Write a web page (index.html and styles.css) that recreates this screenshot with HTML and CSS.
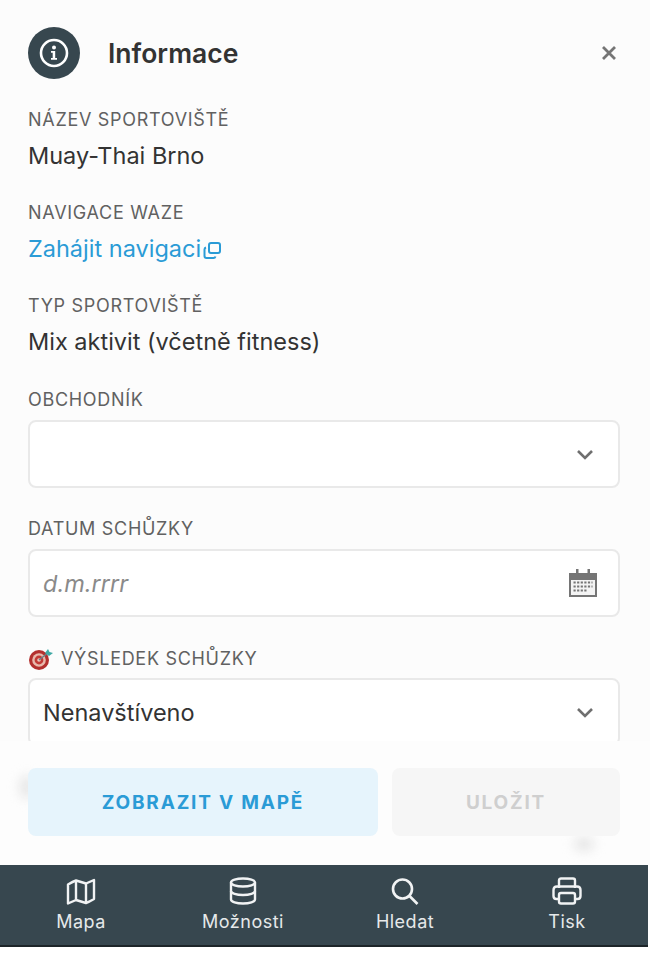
FILE: index.html
```html
<!DOCTYPE html>
<html lang="en">
<head>
    <meta charset="UTF-8">
    <meta name="viewport" content="width=device-width, initial-scale=1.0">
    <title>Informace</title>
    <link rel="stylesheet" href="styles.css">
</head>
<body>
    <div class="panel">
        <div class="scroll">
            <!-- Header -->
            <div class="header">
                <div class="header-icon">
                    <svg width="32" height="32" viewBox="0 0 32 32" fill="none">
                        <circle cx="16" cy="16" r="13" stroke="#fff" stroke-width="2.6"/>
                        <circle cx="16" cy="10.4" r="2" fill="#fff"/>
                        <path d="M13 14h4.2v7H19v1.8h-6V21h1.7v-5.2H13z" fill="#fff"/>
                    </svg>
                </div>
                <h1 class="title">Informace</h1>
                <svg class="close" width="16" height="16" viewBox="0 0 16 16" fill="none">
                    <path d="M2 2l12 12M14 2L2 14" stroke="#757575" stroke-width="2.8"/>
                </svg>
            </div>

            <!-- Info fields -->
            <div class="field">
                <div class="label">Název sportoviště</div>
                <div class="value">Muay-Thai Brno</div>
            </div>
            <div class="field">
                <div class="label">Navigace Waze</div>
                <a class="value link" href="#">Zahájit navigaci<svg width="19" height="19" viewBox="0 0 19 19" fill="none" stroke="#2a9bd6" stroke-width="2"><rect x="6" y="2" width="11" height="10" rx="2"/><path d="M3 6.5c-1 .3-1.500 1-1.500 2V15c0 1.200.8 2 2 2h7c1 0 1.700-.5 2-1.500"/></svg></a>
            </div>
            <div class="field field-last">
                <div class="label">Typ sportoviště</div>
                <div class="value">Mix aktivit (včetně fitness)</div>
            </div>

            <!-- Form fields -->
            <div class="field form-field">
                <div class="label">Obchodník</div>
                <div class="box">
                    <span></span>
                    <svg class="chevron" width="18" height="11" viewBox="0 0 18 11" fill="none"><path d="M2 2l7 7 7-7" stroke="#6f6f6f" stroke-width="2.600"/></svg>
                </div>
            </div>
            <div class="field form-field">
                <div class="label">Datum schůzky</div>
                <div class="box">
                    <span class="placeholder">d.m.rrrr</span>
                    <svg width="30" height="28" viewBox="0 0 30 28">
                        <path d="M1 4h28v24H1z" fill="#757575"/>
                        <path d="M3 11h24v15H3z" fill="#f4f4f4"/>
                        <path d="M8 0h2.500v7H8zM19.500 0H22v7h-2.500z" fill="#757575"/>
                        <path d="M5.500 13.500h19M5.500 17.500h19M5.500 21.500h13" stroke="#757575" stroke-width="2.200" stroke-dasharray="2.200 1.400"/>
                    </svg>
                </div>
            </div>
            <div class="field form-field">
                <div class="label label-target">
                    <svg class="target" width="26" height="22" viewBox="0 0 26 22">
                        <circle cx="11" cy="12" r="10" fill="#b3302e"/>
                        <circle cx="11" cy="12" r="6.800" fill="#e8b9ac"/>
                        <circle cx="11" cy="12" r="4.400" fill="#c23a36"/>
                        <circle cx="11" cy="12" r="1.800" fill="#eec9bd"/>
                        <path d="M11 12l10-8" stroke="#6b7f86" stroke-width="1.500"/>
                        <path d="M17 5l3-4 1.500 3L25 5l-4 3z" fill="#3fa9a5"/>
                    </svg>
                    <span>Výsledek schůzky</span>
                </div>
                <div class="box">
                    <span>Nenavštíveno</span>
                    <svg class="chevron" width="18" height="11" viewBox="0 0 18 11" fill="none"><path d="M2 2l7 7 7-7" stroke="#6f6f6f" stroke-width="2.600"/></svg>
                </div>
            </div>
        </div>

        <!-- Buttons -->
        <div class="actions">
            <span class="ghost ghost-left"></span>
            <span class="ghost ghost-right"></span>
            <button class="btn btn-map">Zobrazit v mapě</button>
            <button class="btn btn-save" disabled>Uložit</button>
        </div>

        <!-- Bottom nav -->
        <div class="nav">
            <div class="nav-item">
                <svg width="30" height="28" viewBox="0 0 30 28" fill="none" stroke="#f1f3f4" stroke-width="2.400" stroke-linejoin="round">
                    <path d="M2 7.500c2.500-1.500 5-3 8-4l10 3 8-3.500v19c-2.500 1.500-5 3-8 4l-10-3-8 3.500z"/>
                    <path d="M10 3.500v19M20 6.500v19"/>
                </svg>
                <span>Mapa</span>
            </div>
            <div class="nav-item">
                <svg width="28" height="28" viewBox="0 0 28 28" fill="none" stroke="#f1f3f4" stroke-width="2.400">
                    <ellipse cx="14" cy="5.500" rx="12" ry="4"/>
                    <path d="M2 5.500v17c0 2.200 5.400 4 12 4s12-1.800 12-4v-17"/>
                    <path d="M2 14c0 2.200 5.400 4 12 4s12-1.800 12-4"/>
                </svg>
                <span>Možnosti</span>
            </div>
            <div class="nav-item">
                <svg width="28" height="28" viewBox="0 0 28 28" fill="none" stroke="#f1f3f4" stroke-width="2.600">
                    <circle cx="11.500" cy="12" r="9.500"/>
                    <path d="M18.500 19l8 8"/>
                </svg>
                <span>Hledat</span>
            </div>
            <div class="nav-item">
                <svg width="30" height="28" viewBox="0 0 30 28" fill="none" stroke="#f1f3f4" stroke-width="2.400" stroke-linejoin="round">
                    <path d="M7 11V3.500C7 2.200 8 1.500 9 1.500h12c1 0 2 .7 2 2V11"/>
                    <path d="M7 22H4.500C2.800 22 1.500 20.700 1.500 19v-6c0-2 1.500-3.500 3.500-3.500h20c2 0 3.500 1.500 3.500 3.500v6c0 1.700-1.300 3-3 3H23"/>
                    <rect x="7" y="16" width="16" height="10.500" rx="2"/>
                </svg>
                <span>Tisk</span>
            </div>
        </div>
    </div>
</body>
</html>
```

FILE: styles.css
```css
html, body {
    margin: 0;
    padding: 0;
    background: #ffffff;
}
body {
    font-family: Inter, "Liberation Sans", sans-serif;
    color: #333333;
}
.panel {
    width: 650px;
    height: 953px;
    overflow: hidden;
    position: relative;
    background: #ffffff;
}
.scroll {
    height: 741px;
    overflow: hidden;
    box-sizing: border-box;
    padding: 27px 30px 0 28px;
    background: #fcfcfc;
}
.header {
    display: flex;
    align-items: center;
    height: 52px;
    margin-bottom: 29px;
}
.header-icon {
    width: 52px;
    height: 52px;
    border-radius: 50%;
    background: #37474f;
    display: flex;
    align-items: center;
    justify-content: center;
}
.title {
    margin: 0 0 0 28px;
    font-size: 26.5px;
    font-weight: 600;
    color: #333333;
    flex: 1;
}
.close {
    margin-right: 3px;
}
.field {
    margin-bottom: 30px;
}
.field-last {
    margin-bottom: 31px;
}
.label {
    font-size: 18px;
    line-height: 24px;
    text-transform: uppercase;
    color: #616161;
    letter-spacing: 0.7px;
    display: flex;
    align-items: center;
}
.value {
    font-size: 23.5px;
    line-height: 30px;
    margin-top: 9px;
    color: #333333;
    display: block;
}
.link {
    color: #2a9bd6;
    text-decoration: none;
}
.link svg {
    vertical-align: -3px;
    margin-left: 2px;
}
.form-field {
    margin-bottom: 29px;
}
.form-field .box {
    margin-top: 8px;
}
.form-field .label-target {
    margin-top: 30px;
}
.form-field .label-target + .box {
    margin-top: 7px;
}
.box {
    height: 68px;
    box-sizing: border-box;
    border: 2px solid #e9e9e9;
    border-radius: 8px;
    background: #ffffff;
    display: flex;
    align-items: center;
    justify-content: space-between;
    padding: 0 20px 0 13px;
    font-size: 23.5px;
    color: #333333;
}
.chevron {
    margin-right: 4px;
}
.placeholder {
    font-style: italic;
    color: #8a8a8a;
}
.target {
    margin-right: 7px;
}
.actions {
    height: 124px;
    box-sizing: border-box;
    padding: 27px 30px 0 28px;
    display: flex;
    gap: 14px;
    align-items: flex-start;
    position: relative;
    background: #fdfdfd;
}
.btn {
    height: 68px;
    border: none;
    border-radius: 8px;
    font-family: inherit;
    font-size: 19px;
    font-weight: 700;
    letter-spacing: 1.8px;
    text-transform: uppercase;
    position: relative;
}
.btn-map {
    width: 350px;
    background: #e6f4fc;
    color: #2a9bd6;
}
.btn-save {
    flex: 1;
    background: #f6f6f6;
    color: #cfcfcf;
}
.ghost {
    position: absolute;
    background: #e4e4e4;
    border-radius: 50%;
    filter: blur(6px);
}
.ghost-left {
    left: 20px;
    top: 34px;
    width: 14px;
    height: 24px;
}
.ghost-right {
    left: 574px;
    top: 96px;
    width: 20px;
    height: 14px;
}
.nav {
    height: 82px;
    width: 648px;
    box-sizing: border-box;
    background: #37474f;
    display: grid;
    grid-template-columns: repeat(4, 1fr);
    border-bottom: 2px solid #1d2529;
    padding-top: 12px;
}
.nav-item {
    display: flex;
    flex-direction: column;
    align-items: center;
    gap: 5px;
    color: #e6e9ea;
    font-size: 18px;
    line-height: 24px;
    letter-spacing: 0.5px;
}
```
